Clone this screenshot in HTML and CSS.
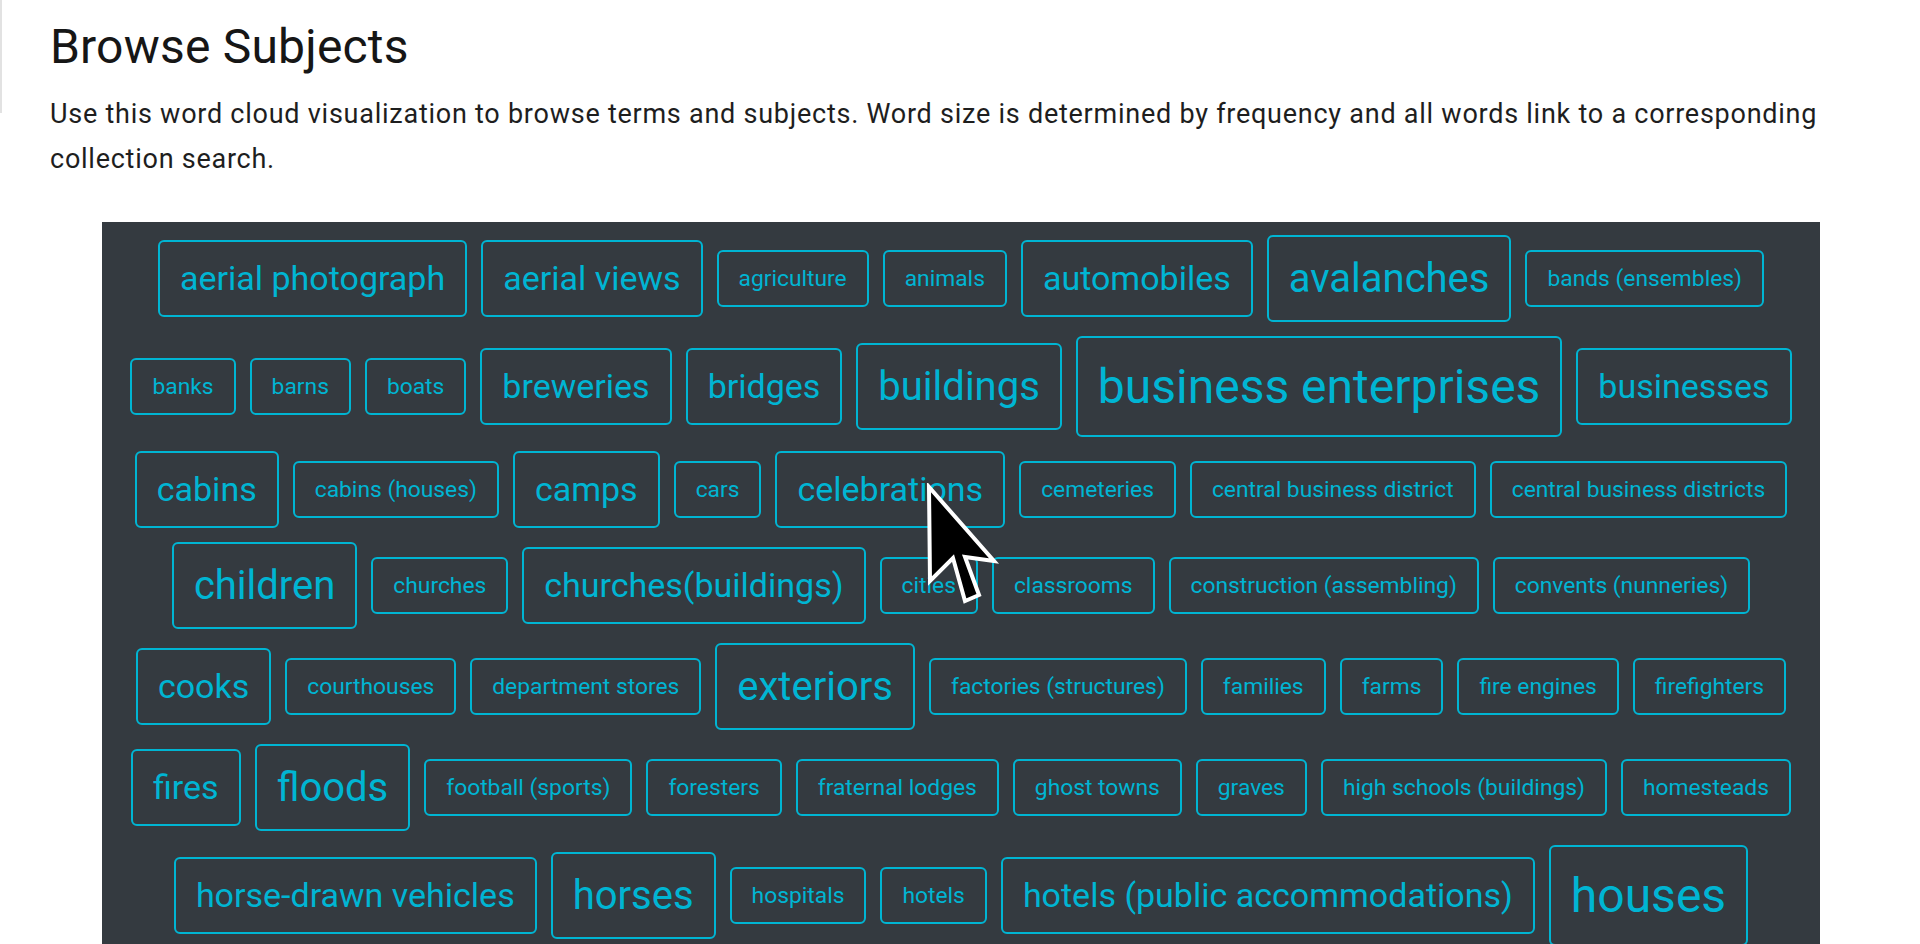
FILE: index.html
```html
<!DOCTYPE html>
<html lang="en">
<head>
<meta charset="utf-8">
<title>Browse Subjects</title>
<link rel="stylesheet" href="styles.css">
</head>
<body>
<div class="edge"></div>
<main class="page">
  <h1 class="title">Browse Subjects</h1>
  <p class="intro">Use this word cloud visualization to browse terms and subjects. Word size is determined by frequency and all words link to a corresponding collection search.</p>
  <section class="cloud">
    <div class="row">
      <a class="tag m" href="#">aerial photograph</a>
      <a class="tag m" href="#">aerial views</a>
      <a class="tag s" href="#">agriculture</a>
      <a class="tag s" href="#">animals</a>
      <a class="tag m" href="#">automobiles</a>
      <a class="tag l" href="#">avalanches</a>
      <a class="tag s" href="#">bands (ensembles)</a>
    </div>
    <div class="row">
      <a class="tag s" href="#">banks</a>
      <a class="tag s" href="#">barns</a>
      <a class="tag s" href="#">boats</a>
      <a class="tag m" href="#">breweries</a>
      <a class="tag m" href="#">bridges</a>
      <a class="tag l" href="#">buildings</a>
      <a class="tag xl" href="#">business enterprises</a>
      <a class="tag m" href="#">businesses</a>
    </div>
    <div class="row">
      <a class="tag m" href="#">cabins</a>
      <a class="tag s" href="#">cabins (houses)</a>
      <a class="tag m" href="#">camps</a>
      <a class="tag s" href="#">cars</a>
      <a class="tag m" href="#">celebrations</a>
      <a class="tag s" href="#">cemeteries</a>
      <a class="tag s" href="#">central business district</a>
      <a class="tag s" href="#">central business districts</a>
    </div>
    <div class="row">
      <a class="tag l" href="#">children</a>
      <a class="tag s" href="#">churches</a>
      <a class="tag m" href="#">churches(buildings)</a>
      <a class="tag s" href="#">cities</a>
      <a class="tag s" href="#">classrooms</a>
      <a class="tag s" href="#">construction (assembling)</a>
      <a class="tag s" href="#">convents (nunneries)</a>
    </div>
    <div class="row">
      <a class="tag m" href="#">cooks</a>
      <a class="tag s" href="#">courthouses</a>
      <a class="tag s" href="#">department stores</a>
      <a class="tag l" href="#">exteriors</a>
      <a class="tag s" href="#">factories (structures)</a>
      <a class="tag s" href="#">families</a>
      <a class="tag s" href="#">farms</a>
      <a class="tag s" href="#">fire engines</a>
      <a class="tag s" href="#">firefighters</a>
    </div>
    <div class="row">
      <a class="tag m" href="#">fires</a>
      <a class="tag l" href="#">floods</a>
      <a class="tag s" href="#">football (sports)</a>
      <a class="tag s" href="#">foresters</a>
      <a class="tag s" href="#">fraternal lodges</a>
      <a class="tag s" href="#">ghost towns</a>
      <a class="tag s" href="#">graves</a>
      <a class="tag s" href="#">high schools (buildings)</a>
      <a class="tag s" href="#">homesteads</a>
    </div>
    <div class="row">
      <a class="tag m" href="#">horse-drawn vehicles</a>
      <a class="tag l" href="#">horses</a>
      <a class="tag s" href="#">hospitals</a>
      <a class="tag s" href="#">hotels</a>
      <a class="tag m" href="#">hotels (public accommodations)</a>
      <a class="tag xl" href="#">houses</a>
    </div>
    <svg class="cursor" width="76" height="126" viewBox="0 0 76 126" aria-hidden="true">
      <polygon points="4,4 5,98 28,75 40,118 54,112 40,74 69,78" fill="#000" stroke="#fff" stroke-width="4" stroke-linejoin="miter"/>
    </svg>
  </section>
</main>
</body>
</html>
```

FILE: styles.css
```css
html, body {
  margin: 0;
  padding: 0;
  background: #ffffff;
}

body {
  font-family: Roboto, "Liberation Sans", Arial, sans-serif;
  color: #1c1c1c;
}

.edge {
  position: absolute;
  left: 0;
  top: 0;
  width: 2px;
  height: 113px;
  background: #e2e2e2;
}

.page {
  height: 100vh;
  overflow: hidden;
  padding: 0 50px;
  box-sizing: border-box;
}

.title {
  margin: 18px 0 0;
  font-size: 48px;
  line-height: 58px;
  font-weight: 400;
  letter-spacing: 0.2px;
  color: #161616;
}

.intro {
  margin: 16px 0 0;
  font-size: 27px;
  line-height: 45px;
  font-weight: 400;
  letter-spacing: 0.75px;
  color: #1e1e1e;
}

.cloud {
  position: relative;
  margin: 40px 0 0 52px;
  width: 1718px;
  background: #343a40;
  padding: 13px 0 60px;
  display: flex;
  flex-direction: column;
  gap: 14px;
}

.row {
  display: flex;
  justify-content: center;
  align-items: center;
  gap: 14px;
}

.tag {
  display: block;
  border: 2px solid #00b5d3;
  border-radius: 6px;
  color: #00b5d3;
  text-decoration: none;
  padding: 8px 20px;
  white-space: nowrap;
  font-weight: 400;
}

.s { font-size: 22.8px; line-height: 37px; }
.m { font-size: 34px; line-height: 57px; }
.l { font-size: 40px; line-height: 67px; }
.xl { font-size: 48px; line-height: 81px; }

.cursor {
  position: absolute;
  left: 823px;
  top: 261px;
}
```
